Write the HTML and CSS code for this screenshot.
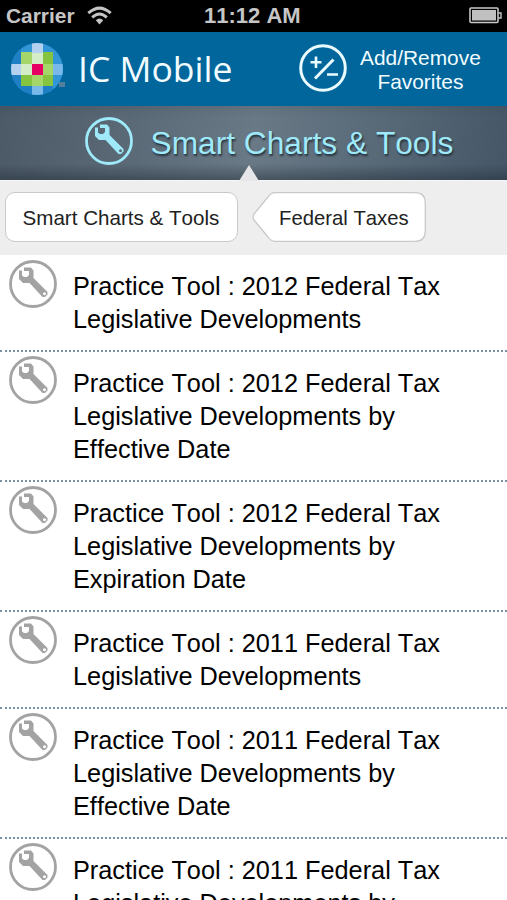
FILE: index.html
```html
<!DOCTYPE html>
<html lang="en">
<head>
<meta charset="utf-8">
<title>IC Mobile</title>
<link rel="stylesheet" href="styles.css">
</head>
<body>
<svg class="defs" aria-hidden="true">
  <symbol id="wrench" viewBox="0 0 48 48">
    <circle cx="24" cy="24" r="22.500" fill="none" stroke="currentColor" stroke-width="2.800"/>
    <path fill="currentColor" fill-rule="evenodd" d="M10 10.500h3v5l2 1.500h3l2-2v-4h-5V7.500h7l2.500 3v7.500L38.500 32v2.500L36 37h-2.500L20.500 23H14l-4-4zM35.500 32.300a1.500 1.500 0 1 0 .01 0z"/>
  </symbol>
</svg>
<div class="status">
  <span class="carrier">Carrier</span>
  <svg class="wifi" viewBox="0 0 25 19"><g fill="none" stroke="#c4c4c4" stroke-width="3"><path d="M1.300 7.200Q12.500-3 23.700 7.200"/><path d="M5.200 11.400Q12.500 4.700 19.800 11.400"/></g><path d="M8.800 14.200Q12.500 11 16.200 14.200L12.500 18.400z" fill="#c4c4c4"/></svg>
  <span class="time">11:12 AM</span>
  <svg class="battery" viewBox="0 0 33 17"><rect x="1" y="1" width="28" height="14.500" rx="1" fill="none" stroke="#c8c8c8" stroke-width="1.600"/><path d="M3 3h24v10.500H3z" fill="#c0c0c0"/><path d="M29.500 6H32v5h-2.500" fill="none" stroke="#c8c8c8" stroke-width="1.400"/></svg>
</div>
<header class="brand">
  <svg class="logo" viewBox="0 0 54 54">
    <clipPath id="globe"><circle cx="26" cy="26" r="26"/></clipPath>
    <g clip-path="url(#globe)">
      <path fill="#3295d6" d="M0 0h54v54H0z"/>
      <path fill="#1f7fc4" d="M0 0h10v54H0zM10 43h32v11H10z"/>
      <path fill="#84c441" d="M10 9h32v34H10z"/>
      <path fill="#a5d66a" d="M10 9h11v12H10zM21 32h11v11H21zM32 21h10v11H32z"/>
      <path fill="#b5d1f0" d="M21 0h11v10H21zM0 21h10v11H0z"/>
      <path fill="#d4edc9" d="M21 10h11v11H21zM10 21h11v11H10z"/>
      <path fill="#78b9ea" d="M21 43h11v10H21zM42 21h10v11H42z"/>
      <path fill="#e60064" d="M21 21h11v11H21z"/>
    </g>
    <path fill="#537f9c" d="M48 39h6v5h-6z"/>
  </svg>
  <h1>IC Mobile</h1>
  <a class="favorites">
    <svg viewBox="0 0 48 48"><g fill="none" stroke="#e9fbff"><circle cx="24" cy="24" r="22.300" stroke-width="3"/><path stroke-width="2.600" d="M11.500 18.300h11M17 12.500v11.500M28 30.500h11"/><path stroke-width="3" d="M16 34.500 34.500 15.500"/></g></svg>
    <span>Add/Remove<br>Favorites</span>
  </a>
</header>
<div class="section">
  <svg><use href="#wrench"/></svg>
  <h2>Smart Charts &amp; Tools</h2>
</div>
<nav class="crumbs">
  <a class="crumb">Smart Charts &amp; Tools</a>
  <a class="back">
    <svg viewBox="0 0 174 50"><path d="M21 .700H163Q173.300.700 173.300 11V39Q173.300 49.300 163 49.300H23Q19 49.300 16 45L2 28Q0 25 2 22L16 5Q19 .700 23 .700z" fill="#fff" stroke="#c9c9cb" stroke-width="1.300"/></svg>
    <span>Federal Taxes</span>
  </a>
</nav>
<ul class="tools">
  <li><svg><use href="#wrench"/></svg><span>Practice Tool : 2012 Federal Tax<br>Legislative Developments</span></li>
  <li><svg><use href="#wrench"/></svg><span>Practice Tool : 2012 Federal Tax<br>Legislative Developments by<br>Effective Date</span></li>
  <li><svg><use href="#wrench"/></svg><span>Practice Tool : 2012 Federal Tax<br>Legislative Developments by<br>Expiration Date</span></li>
  <li><svg><use href="#wrench"/></svg><span>Practice Tool : 2011 Federal Tax<br>Legislative Developments</span></li>
  <li><svg><use href="#wrench"/></svg><span>Practice Tool : 2011 Federal Tax<br>Legislative Developments by<br>Effective Date</span></li>
  <li><svg><use href="#wrench"/></svg><span>Practice Tool : 2011 Federal Tax<br>Legislative Developments by</span></li>
</ul>
</body>
</html>
```
FILE: styles.css
```css
* { box-sizing: border-box; }
html, body { height: 900px; overflow: hidden; }
body {
  margin: 0;
  background: #fff;
  font-family: "Liberation Sans", Arial, sans-serif;
  font-kerning: none;
  color: #000;
  display: flex;
  flex-direction: column;
}
svg { display: block; flex: none; }
h1, h2 { margin: 0; font-weight: 400; white-space: nowrap; }
.defs { position: absolute; width: 0; height: 0; }

.status {
  flex: none;
  height: 32px;
  background: #000;
  color: #c6c6c6;
  display: grid;
  grid-template-columns: 80px 118px 1fr 33px;
  align-items: center;
  padding: 0 5px 0 6px;
  font-weight: 700;
}
.carrier { font-size: 20.9px; }
.wifi { width: 25px; height: 19px; margin: -1px 0 0 1px; }
.time { font-size: 22px; white-space: nowrap; }
.battery { width: 33px; height: 17px; margin-top: -1px; }

.brand {
  flex: none;
  height: 74px;
  background: #00669c;
  display: flex;
  align-items: center;
  color: #f2fcff;
  padding-left: 11px;
}
.logo { width: 54px; height: 54px; margin-top: 2px; }
.brand h1 {
  font-family: "Open Sans", sans-serif;
  font-size: 35.5px;
  line-height: 72px;
  width: 234px;
  padding: 0 0 2px 13px;
}
.favorites { display: flex; align-items: center; gap: 13px; }
.favorites svg { width: 48px; height: 48px; margin-top: -2px; }
.favorites span { font-size: 20.9px; line-height: 23.5px; text-align: center; padding-top: 1px; }

.section {
  flex: none;
  position: relative;
  height: 75px;
  border-bottom: 1px solid #f7f7f8;
  background:
    linear-gradient(rgba(30,40,50,.1), transparent 15%, transparent 78%, rgba(30,40,50,.45)),
    linear-gradient(100deg, #4c5967, #697986 50%, #455767);
  color: #9feafa;
  display: flex;
  align-items: center;
  gap: 17.5px;
  padding: 0 0 3px 85px;
}
.section svg { width: 48px; height: 48px; margin-top: -2px; }
.section h2 { font-size: 31.7px; text-shadow: 1px 2px 2px #26323d; padding-top: 3px; }
.section::after {
  content: "";
  position: absolute;
  left: 239px;
  bottom: -1px;
  width: 20px;
  height: 16px;
  background: #e6e6e8;
  clip-path: polygon(50% 0, 100% 100%, 0 100%);
}

.crumbs {
  flex: none;
  height: 74px;
  background: #eee;
  display: flex;
  align-items: center;
  gap: 14px;
  padding: 0 5px 2px;
  font-size: 20.6px;
  color: #222;
}
.crumb {
  width: 233px;
  height: 50px;
  line-height: 50px;
  padding-left: 16.5px;
  background: #fff;
  border: 1px solid #c9c9cb;
  border-radius: 10px;
  white-space: nowrap;
}
.back { display: grid; width: 174px; height: 50px; line-height: 52px; }
.back svg, .back span { grid-area: 1 / 1; }
.back svg { width: 174px; height: 50px; }
.back span { padding-left: 27px; z-index: 1; font-size: 20.3px; }

.tools { list-style: none; margin: 0; padding: 0; font-size: 25.3px; line-height: 33.27px; }
.tools li {
  display: flex;
  gap: 16px;
  padding: 15px 0 13.25px 9px;
  border-bottom: 2px dotted #7891a5;
}
.tools svg { width: 48px; height: 48px; margin-top: -10.5px; color: #a3a3a3; }
```
